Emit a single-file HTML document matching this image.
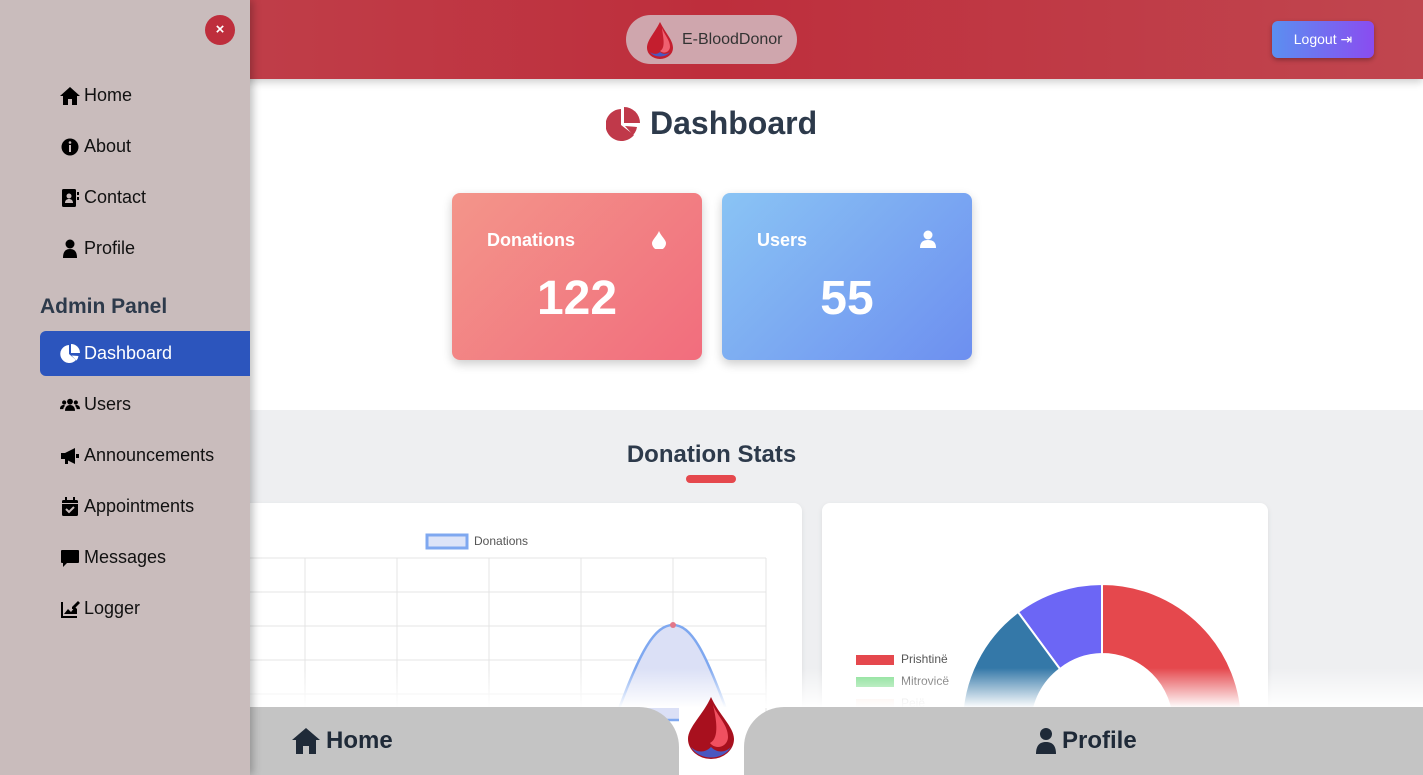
<!DOCTYPE html>
<html><head><meta charset="utf-8"><style>
*{box-sizing:border-box;margin:0;padding:0}
html{width:1423px;height:775px;overflow:hidden}
body{width:1423px;height:775px;overflow:hidden;font-family:"Liberation Sans",sans-serif;background:#fff;position:relative}
.top{position:absolute;left:0;top:0;width:1423px;height:79px;background:linear-gradient(90deg,#c0464f,#be2e3c 50%,#c0464f);box-shadow:0 3px 8px rgba(0,0,0,.2)}
.brand{position:absolute;left:626px;top:15px;width:171px;height:49px;border-radius:25px;background:#cfa6ad;display:flex;align-items:center;padding-left:18px;gap:6px;color:#333;font-size:16px}
.logout{position:absolute;left:1272px;top:21px;width:102px;height:37px;border-radius:6px;background:linear-gradient(90deg,#5b8ff0,#8a4cf0);color:#fff;font-size:14px;display:flex;align-items:center;justify-content:center;box-shadow:0 2px 5px rgba(0,0,0,.3)}
h1{position:absolute;left:606px;top:105px;font-size:32px;color:#2d3a4b;display:flex;align-items:center;gap:10px}
.card{position:absolute;top:193px;width:250px;height:167px;border-radius:8px;color:#fff;box-shadow:0 4px 10px rgba(0,0,0,.2)}
.card .t{position:absolute;left:35px;top:37px;font-size:18px;font-weight:bold}
.card .n{position:absolute;left:0;width:100%;top:78px;text-align:center;font-size:48px;font-weight:bold}
.stats{position:absolute;left:0;top:410px;width:1423px;height:365px;background:#eeeff1}
.stats h2{position:absolute;left:0;width:1423px;text-align:center;top:31px;font-size:24px;color:#2d3a4b}
.bar{position:absolute;left:686px;top:65px;width:50px;height:8px;border-radius:4px;background:#e5484d}
.pc{position:absolute;top:503px;background:#fff;border-radius:8px 8px 0 0;height:272px;box-shadow:0 2px 6px rgba(0,0,0,.08);overflow:hidden}
.fade{position:absolute;left:250px;top:668px;width:1173px;height:40px;background:linear-gradient(rgba(255,255,255,0),#fff)}
.bnav{position:absolute;top:707px;height:68px;background:#c4c4c4;display:flex;align-items:center;font-size:24px;font-weight:bold;color:#1f2a38;gap:6px}
.side{position:absolute;left:0;top:0;width:250px;height:775px;background:#c9bcbc;box-shadow:3px 0 8px rgba(0,0,0,.25)}
.x{position:absolute;left:205px;top:15px;width:30px;height:30px;border-radius:50%;background:#be2e3c;color:#fff;font-size:15px;text-align:center;line-height:30px;font-weight:bold}
.item{position:absolute;left:60px;font-size:18px;color:#111;display:flex;align-items:center;gap:4px}
.item svg{width:20px;height:20px}
.admin{position:absolute;left:40px;top:295px;font-size:21px;font-weight:bold;color:#2d3a4b}
.active{position:absolute;left:40px;top:331px;width:210px;height:45px;background:#2c55bd;border-radius:6px 0 0 6px}
</style></head><body>
<div class="top"></div>
<div class="brand"><svg width="32" height="40" viewBox="0 0 32 40"><path d="M16 2C10 14 3 20 3 28a13 11 0 0 0 26 0C29 20 22 14 16 2z" fill="#c41e2e"/><path d="M18 8c3 8 8 12 8 19a6 6 0 0 1-10 4c6-3 3-14 2-23z" fill="#f06070"/><path d="M6 32c4 6 16 6 20 0-4 3-8 2-10 0-2 2-6 3-10 0z" fill="#4a58c0"/></svg>E-BloodDonor</div>
<div class="logout">Logout ⇥</div>
<h1><svg width="34" height="34" viewBox="0 0 34 34"><path d="M15 2A16 16 0 1 0 28 28L15 18z" fill="#c0394a"/><path d="M18 0v16h16A16 16 0 0 0 18 0z" fill="#c0394a"/><path d="M19 19l12 1a14 14 0 0 1-4 8z" fill="#c0394a"/></svg>Dashboard</h1>
<div class="card" style="left:452px;background:linear-gradient(135deg,#f3958a,#f26d7d)"><div class="t">Donations</div><svg style="position:absolute;left:200px;top:38px" width="14" height="18" viewBox="0 0 14 18"><path d="M7 0C5 5 0 9 0 12a7 7 0 0 0 14 0C14 9 9 5 7 0z" fill="#fff"/></svg><div class="n">122</div></div>
<div class="card" style="left:722px;background:linear-gradient(135deg,#8ac4f4,#6d8ff0)"><div class="t">Users</div><svg style="position:absolute;left:198px;top:37px" width="16" height="18" viewBox="0 0 16 18"><circle cx="8" cy="5" r="4.5" fill="#fff"/><path d="M0 18c0-6 3-8 8-8s8 2 8 8z" fill="#fff"/></svg><div class="n">55</div></div>
<div class="stats"><h2>Donation Stats</h2><div class="bar"></div></div>
<div class="pc" style="left:200px;width:602px">
<svg width="602" height="272" viewBox="200 503 602 272" style="position:absolute;left:0;top:0">
<rect x="427" y="535" width="40" height="13" fill="#dde4f8" stroke="#7fa8f0" stroke-width="3"/>
<text x="474" y="545" font-size="12" fill="#555" font-family="Liberation Sans">Donations</text>
<g stroke="#e4e4e4" stroke-width="1">
<line x1="200" y1="558" x2="766" y2="558"/><line x1="200" y1="592" x2="766" y2="592"/><line x1="200" y1="626" x2="766" y2="626"/><line x1="200" y1="660" x2="766" y2="660"/><line x1="200" y1="694" x2="766" y2="694"/>
<line x1="305" y1="558" x2="305" y2="720"/><line x1="397" y1="558" x2="397" y2="720"/><line x1="489" y1="558" x2="489" y2="720"/><line x1="581" y1="558" x2="581" y2="720"/><line x1="673" y1="558" x2="673" y2="720"/><line x1="766" y1="558" x2="766" y2="720"/></g>
<path d="M615 720C640 650 655 625 673 625S705 650 730 720Z" fill="#dbe0f6" stroke="#7fa8f0" stroke-width="2.5"/>
<circle cx="673" cy="625" r="3" fill="#e3788a"/>
</svg></div>
<div class="pc" style="left:822px;width:446px">
<svg width="446" height="272" viewBox="822 503 446 272" style="position:absolute;left:0;top:0">
<rect x="856" y="655" width="38" height="10" fill="#e5484d"/><text x="901" y="663" font-size="12" fill="#555" font-family="Liberation Sans">Prishtinë</text>
<rect x="856" y="677" width="38" height="10" fill="#7ddd8c"/><text x="901" y="685" font-size="12" fill="#555" font-family="Liberation Sans">Mitrovicë</text>
<rect x="856" y="699" width="38" height="10" fill="#f8e0d6"/><text x="901" y="707" font-size="12" fill="#bbb" font-family="Liberation Sans">Pejë</text>
<path d="M1102 584A140 140 0 0 1 1242 724L1172 724A70 70 0 0 0 1102 654Z" fill="#e5484d" stroke="#fff" stroke-width="2"/>
<path d="M1102 584L1102 654A70 70 0 0 0 1060 669L1018 612A140 140 0 0 1 1102 584Z" fill="#6c66f5" stroke="#fff" stroke-width="2"/>
<path d="M1018 612L1060 669A70 70 0 0 0 1032 724L962 724A140 140 0 0 1 1018 612Z" fill="#3478a8" stroke="#fff" stroke-width="2"/>
</svg></div>
<div class="fade"></div>
<div class="bnav" style="left:250px;width:429px;border-radius:0 40px 0 0;padding-left:42px"><svg width="28" height="26" viewBox="0 0 28 26"><path d="M14 0L0 12h4v14h7v-8h6v8h7V12h4z" fill="#1f2a38"/></svg>Home</div>
<div style="position:absolute;left:679px;top:707px;width:65px;height:68px;background:#fff"></div>
<svg style="position:absolute;left:686px;top:695px" width="50" height="66" viewBox="0 0 50 66"><path d="M25 2C17 20 2 32 2 44a23 20 0 0 0 46 0C48 32 33 20 25 2z" fill="#a8101e"/><path d="M27 10c5 12 15 20 15 32a10 10 0 0 1-18 6c10-5 6-25 3-38z" fill="#f05060"/><path d="M5 52c8 14 32 14 40 0-6 6-14 6-20 0-6 6-14 6-20 0z" fill="#4a58c0"/></svg>
<div class="bnav" style="left:744px;width:679px;border-radius:40px 0 0 0;padding-left:292px"><svg width="20" height="26" viewBox="0 0 20 26"><circle cx="10" cy="6" r="6" fill="#1f2a38"/><path d="M0 26c0-9 4-12 10-12s10 3 10 12z" fill="#1f2a38"/></svg>Profile</div>
<div class="side">
<div class="x">×</div>
<div class="item" style="top:85px"><svg viewBox="0 0 20 20"><path d="M10 1L0 10h3v9h5v-6h4v6h5v-9h3z"/></svg>Home</div>
<div class="item" style="top:136px"><svg viewBox="0 0 20 20"><circle cx="10" cy="10" r="8.5"/><rect x="9" y="8" width="2" height="7" fill="#c9bcbc"/><circle cx="10" cy="5.5" r="1.3" fill="#c9bcbc"/></svg>About</div>
<div class="item" style="top:187px"><svg viewBox="0 0 20 20"><rect x="2" y="1" width="14" height="18" rx="1.5"/><circle cx="9" cy="8" r="2.5" fill="#c9bcbc"/><path d="M5 15c0-3 2-4 4-4s4 1 4 4z" fill="#c9bcbc"/><rect x="17" y="4" width="2" height="3"/><rect x="17" y="9" width="2" height="3"/></svg>Contact</div>
<div class="item" style="top:238px"><svg viewBox="0 0 20 20"><circle cx="10" cy="5" r="4.5"/><path d="M3 19c0-7 3-9 7-9s7 2 7 9z"/></svg>Profile</div>
<div class="admin">Admin Panel</div>
<div class="active"></div>
<div class="item" style="top:343px;color:#fff"><svg viewBox="0 0 20 20"><path d="M9 1a9 9 0 1 0 7 15L9 10z" fill="#fff"/><path d="M11 0v9h9a9 9 0 0 0-9-9z" fill="#fff"/><path d="M11.5 11.5l7 .5a9 9 0 0 1-2 4.5z" fill="#fff"/></svg>Dashboard</div>
<div class="item" style="top:394px"><svg viewBox="0 0 24 20"><circle cx="12" cy="6" r="3.5"/><circle cx="5" cy="7" r="2.5"/><circle cx="19" cy="7" r="2.5"/><path d="M6 17c0-5 3-7 6-7s6 2 6 7z"/><path d="M0 15c0-4 2-5 5-5l1 1c-1 1-2 2-2 4z"/><path d="M24 15c0-4-2-5-5-5l-1 1c1 1 2 2 2 4z"/></svg>Users</div>
<div class="item" style="top:445px"><svg viewBox="0 0 20 20"><path d="M1 7h4l10-5v16L5 13H1z"/><rect x="5" y="13" width="3" height="5"/><rect x="16" y="8" width="3" height="4"/></svg>Announcements</div>
<div class="item" style="top:496px"><svg viewBox="0 0 20 20"><rect x="2" y="3" width="16" height="16" rx="1.5"/><rect x="5" y="0" width="2" height="5"/><rect x="13" y="0" width="2" height="5"/><rect x="2" y="6" width="16" height="1" fill="#c9bcbc"/><path d="M6 12l3 3 5-5" stroke="#c9bcbc" stroke-width="2" fill="none"/></svg>Appointments</div>
<div class="item" style="top:547px"><svg viewBox="0 0 20 20"><path d="M2 2h16a1 1 0 0 1 1 1v11a1 1 0 0 1-1 1H7l-4 4v-4H2a1 1 0 0 1-1-1V3a1 1 0 0 1 1-1z"/></svg>Messages</div>
<div class="item" style="top:598px"><svg viewBox="0 0 20 20"><path d="M1 3h2v14h14v2H1z"/><path d="M4 15l4-5 3 3 4-5 2 2V15z"/><path d="M12 8l6-6 2 2-6 6h-2z"/></svg>Logger</div>
</div>
</body></html>
